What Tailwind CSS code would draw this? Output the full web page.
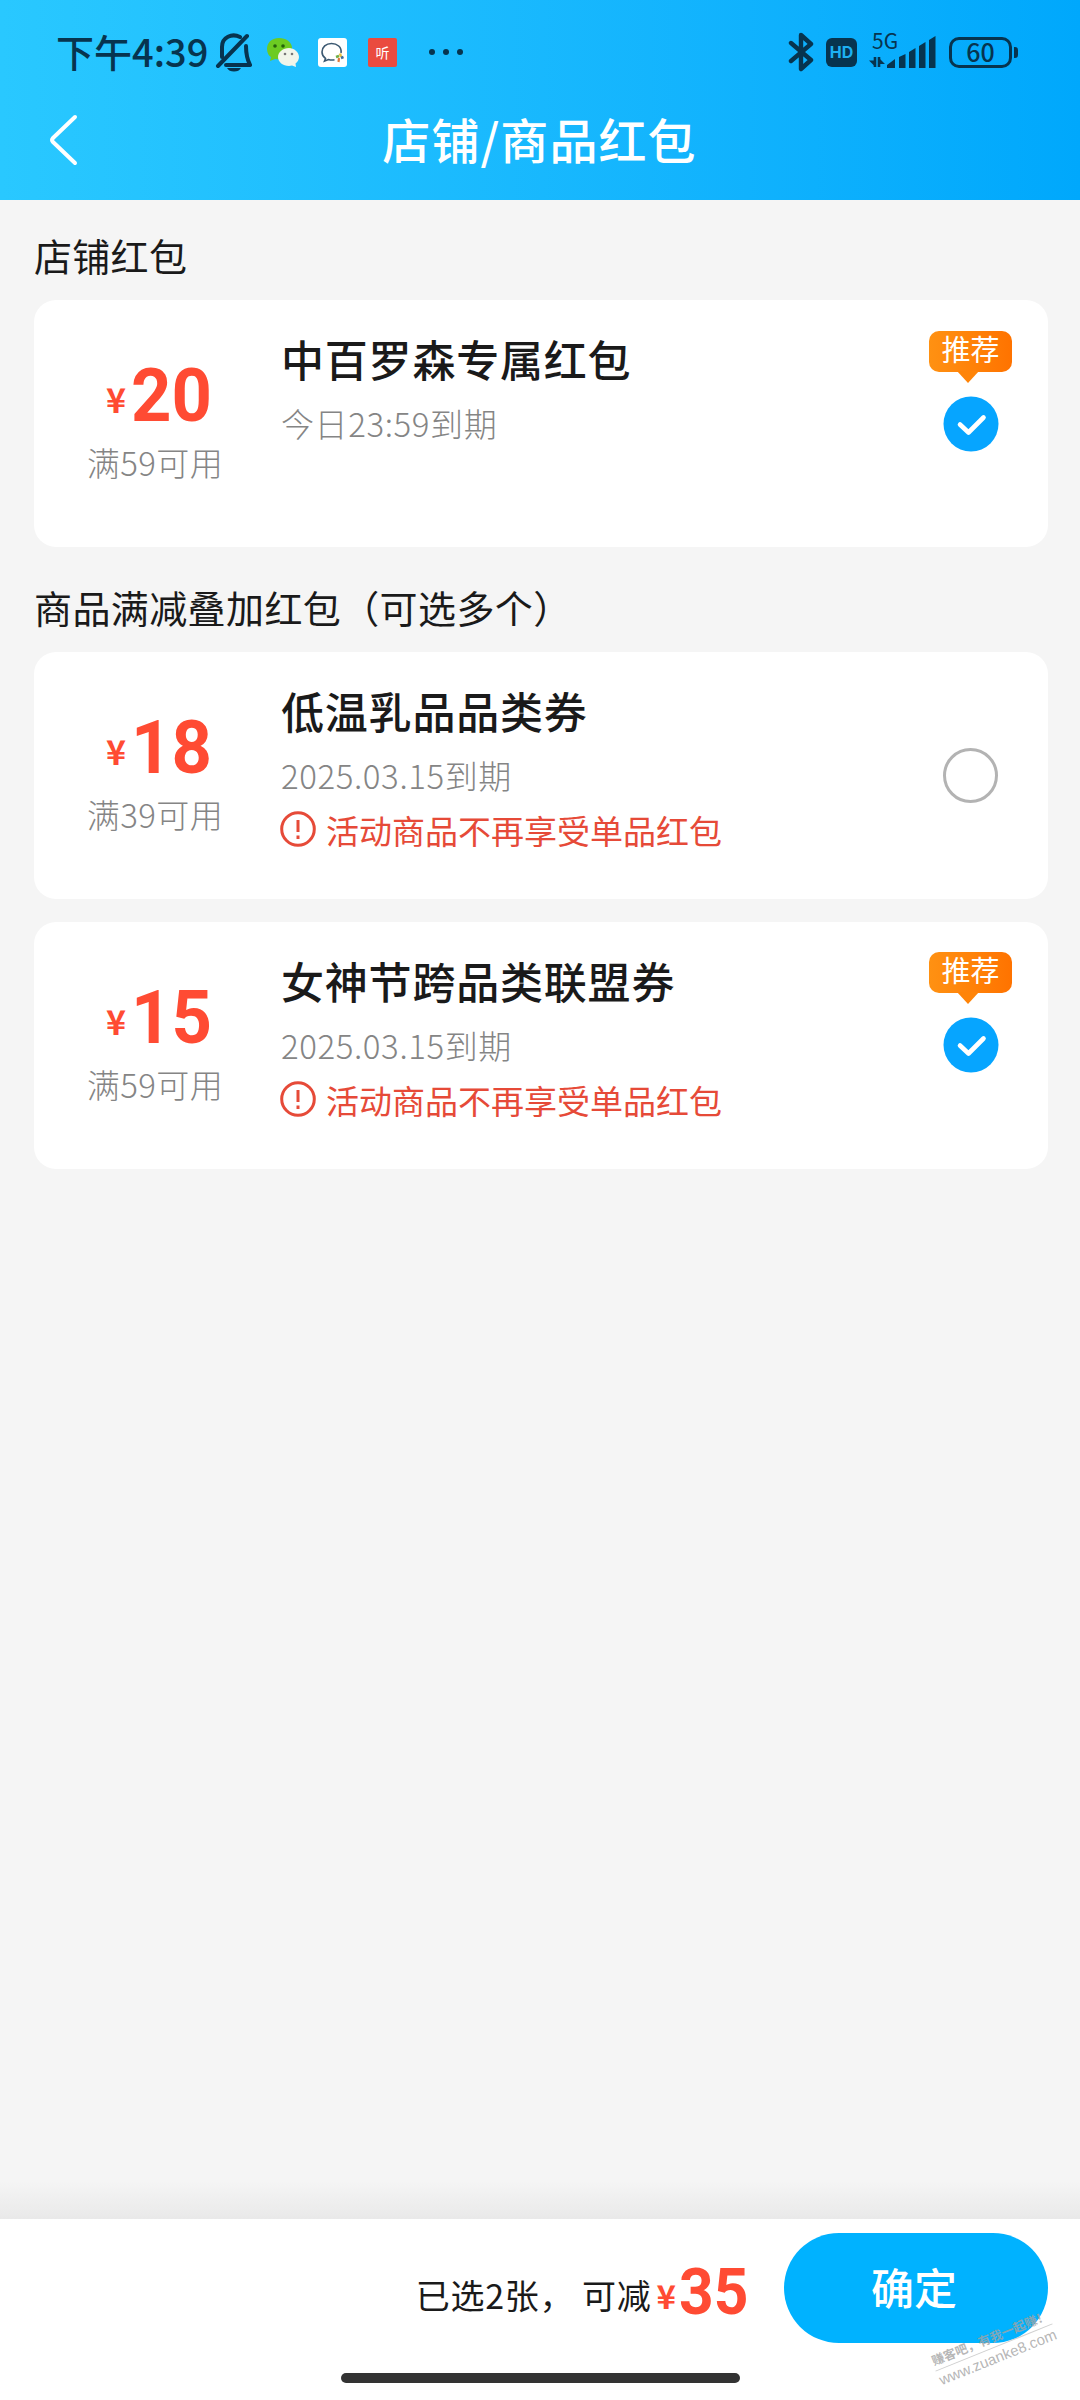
<!DOCTYPE html>
<html lang="zh-CN">
<head>
<meta charset="utf-8">
<title>店铺/商品红包</title>
<script src="https://cdn.jsdelivr.net/npm/@tailwindcss/browser@4"></script>
</head>
<body class="bg-[#f5f5f5]">
<div class="relative flex h-[2400px] w-[1080px] flex-col overflow-hidden bg-[#f5f5f5] font-['Noto_Sans_CJK_SC',sans-serif] text-[#1a1a1a]">

  <header class="h-[200px] bg-linear-to-r from-[#29c8ff] to-[#00a8fc] text-[#07344f]">
    <!-- status bar -->
    <div class="flex h-[104px] items-center pl-[56px] pr-[62px]">
      <div class="-mt-[3px] w-[157px] text-[38px] leading-none font-medium whitespace-nowrap">下午4:39</div>
      <svg class="ml-[2px] h-[40px] w-[38px]" viewBox="0 0 38 40" fill="none" stroke="currentColor" stroke-width="4" stroke-linecap="round" stroke-linejoin="round">
        <path d="M3 34 32 4M25 5C17 1 7 5 7 15v10M31 14c0 9 1 13 4 19H11"/>
        <path d="M12 36h14q-2 3.500-7 3.500t-7-3.500z" fill="currentColor" stroke="none"/>
      </svg>
      <svg class="ml-[13px] h-[30px] w-[34px]" viewBox="0 0 34 30">
        <path d="M13 1C5 1 1 6 1 12c0 4 2 7 4 8l-1 4 5-2c10 2 17-3 17-11C26 5 20 1 13 1z" fill="#6ccb22"/>
        <path d="M23 11c-6 0-11 4-11 9s5 9 11 9l3-.5 4 1.500-.5-3.500c2-1.500 3.500-4 3.500-6.500 0-5-5-9-10-9z" fill="#f1f5ea"/>
        <g fill="#25620b"><circle cx="9" cy="9" r="1.800"/><circle cx="17" cy="9" r="1.800"/></g>
        <g fill="#777"><circle cx="19" cy="17" r="1.300"/><circle cx="26" cy="17" r="1.300"/></g>
      </svg>
      <svg class="ml-[18px] h-[29px] w-[29px]" viewBox="0 0 29 29">
        <rect width="29" height="29" rx="3" fill="#fff"/>
        <path d="M23 15C24 9 19 5.500 13.500 5.500S4 9 4 14c0 3 1.500 5 3.500 6.500L6.500 23l4-1.500c2 .6 4 .7 6 .3" fill="none" stroke="#3b5871" stroke-width="1.600"/>
        <path d="m18 19 3-1" stroke="#6fae46" stroke-width="2.500"/><path d="m22 15.500 1 3.500" stroke="#eac23f" stroke-width="2.500"/><path d="m23 20 2.500-1" stroke="#3f6f9d" stroke-width="2.500"/><path d="m21 20-.5 4" stroke="#e07a3d" stroke-width="2.200"/>
      </svg>
      <div class="ml-[21px] flex h-[29px] w-[29px] items-center justify-center rounded-[2px] bg-[#ea4b3f] text-[14px] leading-none text-white">听</div>
      <div class="ml-[32px] flex gap-[8px]">
        <i class="size-[6px] rounded-full bg-current"></i><i class="size-[6px] rounded-full bg-current"></i><i class="size-[6px] rounded-full bg-current"></i>
      </div>
      <svg class="ml-auto h-[40px] w-[26px]" viewBox="0 0 26 40" fill="none" stroke="currentColor" stroke-width="4.400" stroke-linejoin="round" stroke-linecap="round"><path d="m3 11 20 17-10 9V3l10 9L3 29"/></svg>
      <div class="ml-[12px] flex h-[29px] w-[31px] items-center justify-center rounded-[6px] bg-current"><span class="font-['Inter'] text-[16px] leading-none font-bold text-[#1db0f2]">HD</span></div>
      <div class="ml-[11px] flex h-[40px] w-[69px] flex-col">
        <span class="-mt-[2px] ml-[4px] text-[21px] leading-[20px]">5G</span>
        <svg class="-mt-[14px] h-[36px] w-[69px] shrink-0" viewBox="0 4 69 36">
          <g fill="currentColor"><path d="M19 36v-3l8-6v9zM31 36V25l6.500-3v14zM41 36V20l6.500-4v20zM51 36V14l6.500-4v26zM61 36V8l6.500-4v32z"/></g>
          <path d="M7 35V25M11 25v10" fill="none" stroke="currentColor" stroke-width="2.600"/>
          <path d="M7 34.500V28.500H1zM11 26v6h6z" fill="currentColor"/>
        </svg>
      </div>
      <div class="ml-[12px] flex h-[31px] w-[63px] items-center justify-center rounded-[10px] border-[3px] border-current text-[25px] leading-none font-medium"><span class="-mt-[2px]">60</span></div>
      <i class="ml-[2px] h-[11px] w-[4px] rounded-r-[3px] bg-current"></i>
    </div>
    <!-- title bar -->
    <div class="flex h-[72px] items-center justify-center text-white">
      <svg class="ml-[48px] h-[52px] w-[32px]" viewBox="0 0 32 52" fill="none" stroke="currentColor" stroke-width="4" stroke-linecap="round" stroke-linejoin="round"><path d="M27 3 5 24q-2 2 0 4l22 21"/></svg>
      <h1 class="-mt-[4px] mr-[81px] flex-1 text-center text-[48px] leading-none font-medium tracking-[1.1px]">店铺/商品红包</h1>
    </div>
  </header>

  <main class="flex-1 pr-[32px] pl-[34px]">
    <h2 class="pt-[35px] text-[38px] leading-[40px] tracking-[0.3px]">店铺红包</h2>
    <section class="mt-[25px] flex h-[247px] rounded-[22px] bg-white">
      <div class="flex w-[248px] flex-col items-center pt-[59px] pr-[6px]">
        <div class="ml-[4px] flex items-end text-[#ff4b33]"><span class="mr-[5px] pb-[15px] text-[34px] leading-none font-bold">¥</span><span class="w-[77px] origin-left scale-x-[0.94] font-['Roboto'] text-[75px] leading-[72px] font-bold">20</span></div>
        <p class="mt-[15px] text-[33px] leading-none font-light tracking-[0.4px] text-[#858585]">满59可用</p>
      </div>
      <div class="flex-1 pt-[37px]">
        <h3 class="-ml-[1px] text-[43px] leading-none font-medium tracking-[0.8px]">中百罗森专属红包</h3>
        <p class="mt-[27px] -ml-[1px] text-[33px] leading-none font-light tracking-[0.6px] text-[#858585]">今日23:59到期</p>
      </div>
      <div class="mr-[36px] flex w-[83px] flex-col items-center pt-[31px]">
        <div class="relative flex h-[41px] w-[83px] items-center justify-center rounded-[10px] bg-linear-to-r from-[#ff9112] to-[#ff7300] pb-[6px] text-[29px] leading-none text-white">推荐
          <svg class="absolute top-[40px] left-[28px] h-[12px] w-[22px]" viewBox="0 0 22 12"><path d="M0 0h22L11 12z" fill="#ff8408"/></svg>
        </div>
        <svg class="mt-[24px] size-[56px]" viewBox="0 0 56 56"><circle cx="28" cy="28" r="27.500" fill="#06a5ff"/><path d="m17 28.500 8.500 8 15-15" fill="none" stroke="#fff" stroke-width="4.600" stroke-linecap="round" stroke-linejoin="round"/></svg>
      </div>
    </section>

    <h2 class="pt-[40px] text-[38px] leading-[40px] tracking-[0.4px]">商品满减叠加红包（可选多个）</h2>
    <section class="mt-[25px] flex h-[247px] rounded-[22px] bg-white">
      <div class="flex w-[248px] flex-col items-center pt-[59px] pr-[6px]">
        <div class="ml-[4px] flex items-end text-[#ff4b33]"><span class="mr-[5px] pb-[15px] text-[34px] leading-none font-bold">¥</span><span class="w-[77px] origin-left scale-x-[0.94] font-['Roboto'] text-[75px] leading-[72px] font-bold">18</span></div>
        <p class="mt-[15px] text-[33px] leading-none font-light tracking-[0.4px] text-[#858585]">满39可用</p>
      </div>
      <div class="flex-1 pt-[37px]">
        <h3 class="-ml-[1px] text-[43px] leading-none font-medium tracking-[0.8px]">低温乳品品类券</h3>
        <p class="mt-[27px] -ml-[1px] text-[33px] leading-none font-light tracking-[0.6px] text-[#858585]">2025.03.15到期</p>
        <p class="mt-[19px] flex items-center gap-[10px] text-[33px] leading-none text-[#e64a38]"><svg class="-ml-[2px] size-[36px]" viewBox="0 0 36 36" fill="none" stroke="currentColor" stroke-width="3"><circle cx="18" cy="18" r="16.300"/><path d="M18 9v12M18 24.500v3.500"/></svg><span class="mt-[2px]">活动商品不再享受单品红包</span></p>
      </div>
      <div class="mr-[36px] flex w-[83px] flex-col items-center pt-[96px]">
        <i class="size-[55px] rounded-full border-[3px] border-[#b3b3b3]"></i>
      </div>
    </section>

    <section class="mt-[23px] flex h-[247px] rounded-[22px] bg-white">
      <div class="flex w-[248px] flex-col items-center pt-[59px] pr-[6px]">
        <div class="ml-[4px] flex items-end text-[#ff4b33]"><span class="mr-[5px] pb-[15px] text-[34px] leading-none font-bold">¥</span><span class="w-[77px] origin-left scale-x-[0.94] font-['Roboto'] text-[75px] leading-[72px] font-bold">15</span></div>
        <p class="mt-[15px] text-[33px] leading-none font-light tracking-[0.4px] text-[#858585]">满59可用</p>
      </div>
      <div class="flex-1 pt-[37px]">
        <h3 class="-ml-[1px] text-[43px] leading-none font-medium tracking-[0.8px]">女神节跨品类联盟券</h3>
        <p class="mt-[27px] -ml-[1px] text-[33px] leading-none font-light tracking-[0.6px] text-[#858585]">2025.03.15到期</p>
        <p class="mt-[19px] flex items-center gap-[10px] text-[33px] leading-none text-[#e64a38]"><svg class="-ml-[2px] size-[36px]" viewBox="0 0 36 36" fill="none" stroke="currentColor" stroke-width="3"><circle cx="18" cy="18" r="16.300"/><path d="M18 9v12M18 24.500v3.500"/></svg><span class="mt-[2px]">活动商品不再享受单品红包</span></p>
      </div>
      <div class="mr-[36px] flex w-[83px] flex-col items-center pt-[30px]">
        <div class="relative flex h-[41px] w-[83px] items-center justify-center rounded-[10px] bg-linear-to-r from-[#ff9112] to-[#ff7300] pb-[6px] text-[29px] leading-none text-white">推荐
          <svg class="absolute top-[40px] left-[28px] h-[12px] w-[22px]" viewBox="0 0 22 12"><path d="M0 0h22L11 12z" fill="#ff8408"/></svg>
        </div>
        <svg class="mt-[24px] size-[56px]" viewBox="0 0 56 56"><circle cx="28" cy="28" r="27.500" fill="#06a5ff"/><path d="m17 28.500 8.500 8 15-15" fill="none" stroke="#fff" stroke-width="4.600" stroke-linecap="round" stroke-linejoin="round"/></svg>
      </div>
    </section>
  </main>

  <div class="h-[38px] bg-linear-to-b from-[#f5f5f5] to-[#e9e9e9]"></div>
  <footer class="flex h-[181px] flex-col bg-white">
    <div class="flex h-[138px] items-center justify-end pr-[32px]">
      <p class="mt-[14px] text-[34px] leading-none tracking-[0.7px]">已选2张<span class="mr-[8px]">，</span>可减</p>
      <span class="mt-[14px] ml-[5px] text-[33px] leading-none font-bold text-[#ff4b33]">¥</span>
      <span class="mt-[9px] ml-[3px] w-[105px] origin-left scale-x-[0.93] font-['Roboto'] text-[65px] leading-none font-bold text-[#ff4b33]">35</span>
      <button class="h-[110px] w-[264px] rounded-[55px] bg-[#00b2ff] pr-[4px] pb-[4px] text-[43px] leading-none font-medium text-white">确定</button>
    </div>
    <div class="mx-auto mt-[16px] h-[10px] w-[399px] rounded-full bg-[#333]"></div>
  </footer>

  <!-- rotated site mark over the corner -->
  <div class="absolute top-[2327px] left-[931px] w-[126px] -rotate-[22deg] text-center text-[#a3a3a3]/80">
    <div class="border-b border-[#bbb]/70 pb-[1px] text-[12.500px] leading-[19px] font-bold whitespace-nowrap">赚客吧，有我一起赚！</div>
    <div class="font-['Liberation_Sans'] text-[15px] leading-[20px] whitespace-nowrap">www.zuanke8.com</div>
  </div>
</div>
</body>
</html>
